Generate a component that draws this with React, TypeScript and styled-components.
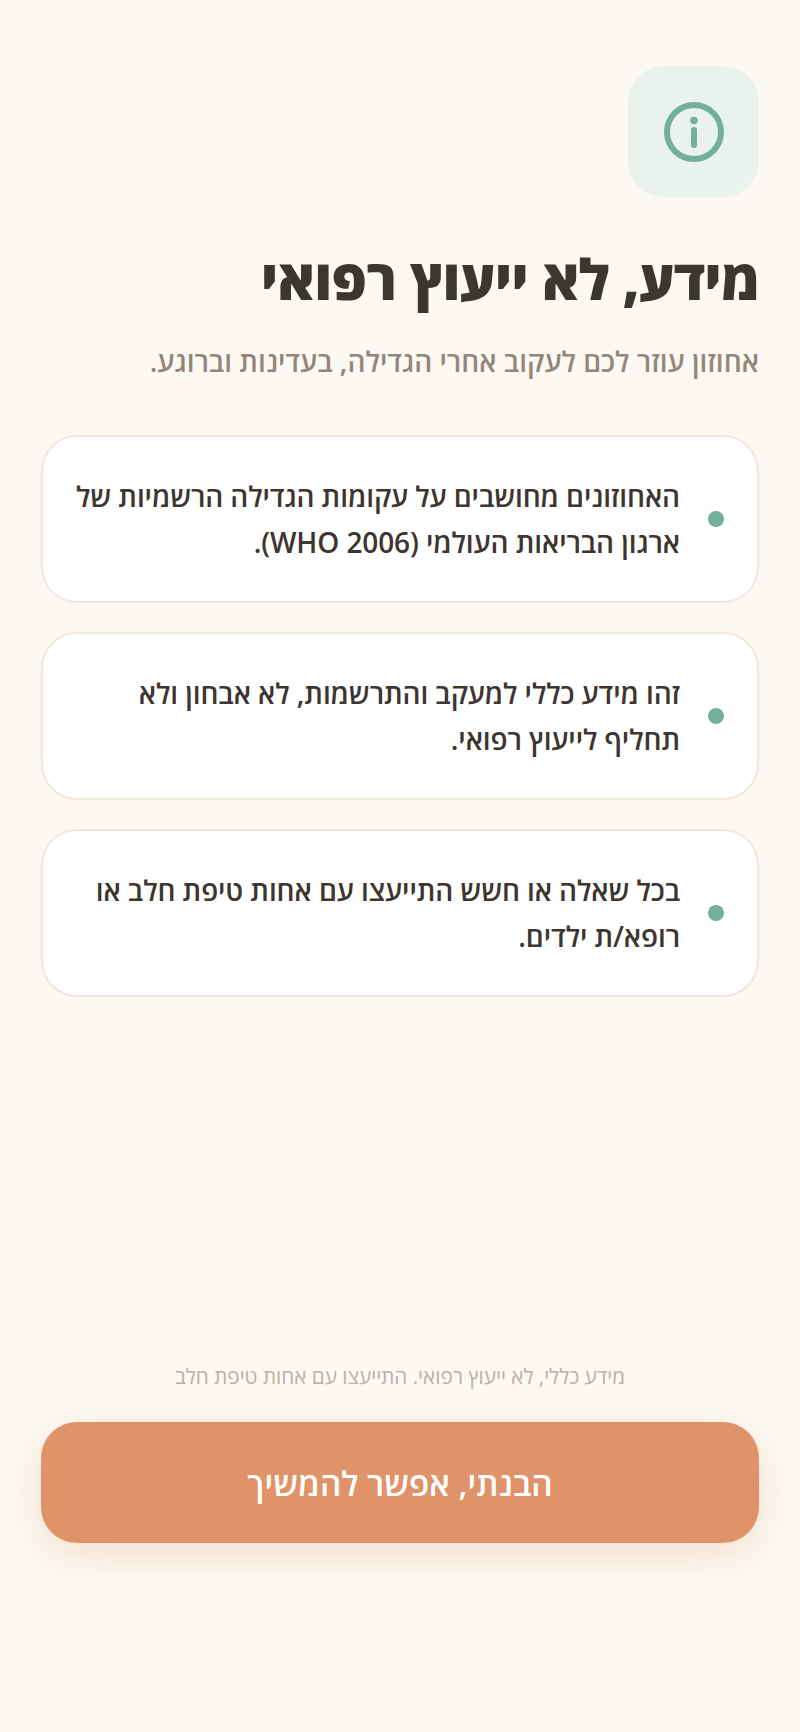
import React from 'react';
import styled, { createGlobalStyle } from 'styled-components';

const GlobalStyle = createGlobalStyle`
  html, body { margin: 0; padding: 0; background: #fcf9f2; }
  * { box-sizing: border-box; }
`;

const points = [
  'האחוזונים מחושבים על עקומות הגדילה הרשמיות של ארגון הבריאות העולמי (WHO 2006).',
  'זהו מידע כללי למעקב והתרשמות, לא אבחון ולא תחליף לייעוץ רפואי.',
  'בכל שאלה או חשש התייעצו עם אחות טיפת חלב או רופא/ת ילדים.',
];

const App = () => {
  return (
    <Page dir="rtl">
      <GlobalStyle />
      <IconBox>
        <svg width="60" height="60" viewBox="0 0 60 60" fill="none" stroke="#72b09a" strokeLinecap="round">
          <circle cx="30" cy="30" r="27" strokeWidth="6" />
          <line x1="30" y1="28" x2="30" y2="43" strokeWidth="6" />
          <circle cx="30" cy="18.5" r="3.8" fill="#72b09a" stroke="none" />
        </svg>
      </IconBox>
      <Title>מידע, לא ייעוץ רפואי</Title>
      <Subtitle>אחוזון עוזר לכם לעקוב אחרי הגדילה, בעדינות וברוגע.</Subtitle>
      <CardList>
        {points.map((text) => (
          <Card key={text}>
            <Dot />
            <CardText>{text}</CardText>
          </Card>
        ))}
      </CardList>
      <Footer>
        <Note>מידע כללי, לא ייעוץ רפואי. התייעצו עם אחות טיפת חלב</Note>
        <ContinueButton>הבנתי, אפשר להמשיך</ContinueButton>
      </Footer>
    </Page>
  );
};

const Page = styled.div`
  width: 800px;
  height: 1732px;
  display: flex;
  flex-direction: column;
  padding: 66px 41px 189px;
  background: #fcf9f2;
  font-family: "Open Sans", "Noto Sans", sans-serif;
  color: #3d3530;
`;

const IconBox = styled.div`
  width: 131px;
  height: 131px;
  border-radius: 36px;
  background: #e9f2ec;
  display: flex;
  align-items: center;
  justify-content: center;
`;

const Title = styled.h1`
  margin: 41px 0 0;
  font-size: 56px;
  line-height: 80px;
  font-weight: 800;
  letter-spacing: -0.8px;
`;

const Subtitle = styled.p`
  margin: 21px 0 0;
  font-size: 28px;
  line-height: 44px;
  font-weight: 600;
  color: #93877c;
`;

const CardList = styled.div`
  margin-top: 52px;
  display: flex;
  flex-direction: column;
  gap: 29px;
`;

const Card = styled.div`
  height: 168px;
  display: flex;
  align-items: center;
  gap: 28px;
  padding: 0 33px 0 14px;
  background: #fff;
  border: 2px solid #f0e8dc;
  border-radius: 36px;
`;

const Dot = styled.span`
  flex: none;
  width: 16px;
  height: 16px;
  border-radius: 50%;
  background: #72b09a;
`;

const CardText = styled.p`
  margin: 0;
  font-size: 28px;
  line-height: 46px;
  font-weight: 600;
  letter-spacing: -0.1px;
`;

const Footer = styled.div`
  margin-top: auto;
  display: flex;
  flex-direction: column;
  gap: 30px;
`;

const Note = styled.p`
  margin: 0;
  text-align: center;
  font-size: 20.7px;
  line-height: 32px;
  color: #bbb0a5;
`;

const ContinueButton = styled.button`
  height: 121px;
  border: 0;
  border-radius: 36px;
  background: #e09268;
  color: #fff;
  font-family: inherit;
  font-size: 33.3px;
  font-weight: 600;
  box-shadow: 0 12px 40px rgba(224, 146, 104, 0.25);
`;

export default App;
